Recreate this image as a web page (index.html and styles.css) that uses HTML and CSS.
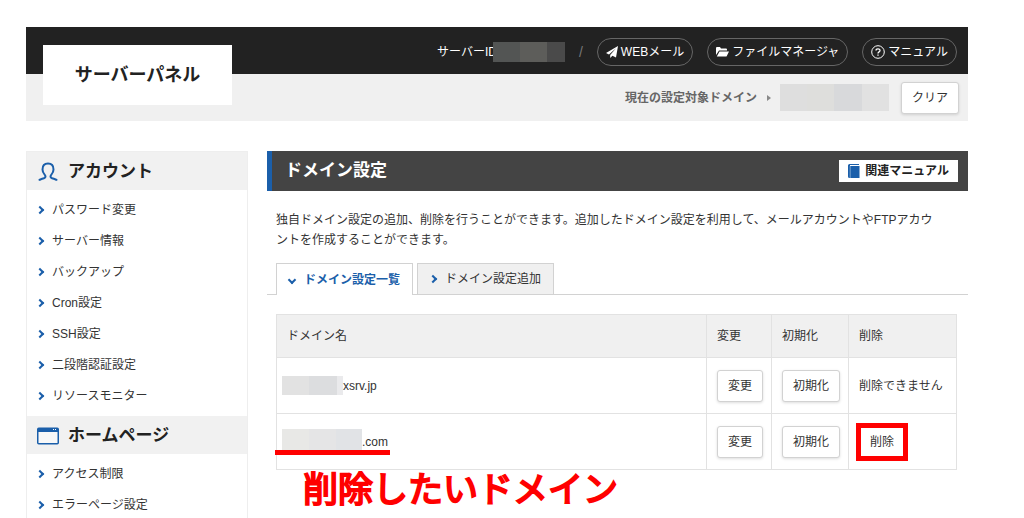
FILE: index.html
```html
<!DOCTYPE html>
<html lang="ja">
<head>
<meta charset="utf-8">
<title>サーバーパネル</title>
<link rel="stylesheet" href="styles.css">
</head>
<body>
<header class="header">
  <div class="header-top">
    <span class="server-id">サーバーID<span class="mask mask-id"></span></span>
    <span class="slash">/</span>
    <a class="pill" href="#"><svg width="12" height="12" viewBox="0 0 12 12"><path fill="#fff" d="M12 0 0 7l3 1.500L10 2.200 4.200 9V12l2.200-2.300L10 11.500z"/></svg>WEBメール</a>
    <a class="pill" href="#"><svg width="13" height="12" viewBox="0 0 13 12"><path fill="#fff" d="M0 9V2q0-1 1-1h3l1 1.500h5q1 0 1 1V4.500H3L0 9zM3.500 5.500H13L10.800 10q-.3.500-.8.500H.800z"/></svg>ファイルマネージャ</a>
    <a class="pill" href="#"><svg width="14" height="14" viewBox="0 0 14 14" fill="none" stroke="#fff"><circle cx="7" cy="7" r="6.300"/><path stroke-width="1.300" d="M5 5.600C5 3.300 9 3.300 9 5.500 9 7 7 6.800 7 8.500M7 9.500v1.300"/></svg>マニュアル</a>
  </div>
  <div class="header-sub">
    <span class="target">現在の設定対象ドメイン</span>
    <svg class="target-arrow" width="4" height="6" viewBox="0 0 4 6"><path fill="#888" d="M0 0l4 3-4 3z"/></svg>
    <span class="mask mask-domain"></span>
    <button class="btn" type="button">クリア</button>
  </div>
  <a class="logo" href="#">サーバーパネル</a>
</header>

<div class="layout">
  <nav class="side">
    <h2 class="side-title"><svg width="22" height="20" viewBox="0 0 22 20" fill="none" stroke="#1b5faa" stroke-width="2"><path d="M2 18.500C3 16.500 8.500 17 8.500 14.500 8.500 12.500 5.500 11.500 5.500 7.500 5.500 3.500 7.800 1.500 11 1.500s5.500 2 5.500 6c0 4-3 5-3 7 0 2.500 5.500 2 6.500 4"/></svg>アカウント</h2>
    <ul class="side-list">
      <li><a href="#">パスワード変更</a></li>
      <li><a href="#">サーバー情報</a></li>
      <li><a href="#">バックアップ</a></li>
      <li><a href="#">Cron設定</a></li>
      <li><a href="#">SSH設定</a></li>
      <li><a href="#">二段階認証設定</a></li>
      <li><a href="#">リソースモニター</a></li>
    </ul>
    <h2 class="side-title"><svg width="22" height="18" viewBox="0 0 22 18"><rect x=".750" y="1.250" width="20.500" height="15.500" rx="1" fill="#f8f8f8" stroke="#1b5faa" stroke-width="1.500"/><path fill="#1b5faa" d="M1 1h20v4H1z"/><path stroke="#fff" stroke-width="1" stroke-dasharray="1 1" d="M16 2.500h4"/></svg>ホームページ</h2>
    <ul class="side-list">
      <li><a href="#">アクセス制限</a></li>
      <li><a href="#">エラーページ設定</a></li>
    </ul>
  </nav>

  <main class="main">
    <div class="title-bar">
      <h1>ドメイン設定</h1>
      <a class="manual" href="#"><svg width="12" height="14" viewBox="0 0 12 14"><path fill="#1b5faa" d="M1.500 0H11v1H2v1h9.500v12H1.500Q0 14 0 12.500v-11Q0 0 1.500 0z"/><path stroke="#8fb2d8" stroke-width=".800" d="M2.200 2v12"/></svg>関連マニュアル</a>
    </div>
    <p class="lead">独自ドメイン設定の追加、削除を行うことができます。追加したドメイン設定を利用して、メールアカウントやFTPアカウントを作成することができます。</p>
    <div class="tabs">
      <a class="tab tab-active" href="#">ドメイン設定一覧</a>
      <a class="tab" href="#">ドメイン設定追加</a>
    </div>
    <div class="table-area">
      <table class="domains">
        <thead>
          <tr><th class="col-name" scope="col">ドメイン名</th><th class="col-edit" scope="col">変更</th><th class="col-init" scope="col">初期化</th><th class="col-del" scope="col">削除</th></tr>
        </thead>
        <tbody>
          <tr>
            <td><div class="domain"><span class="mask mask-a"></span>xsrv.jp</div></td>
            <td><button class="btn" type="button">変更</button></td>
            <td><button class="btn" type="button">初期化</button></td>
            <td>削除できません</td>
          </tr>
          <tr>
            <td><div class="domain domain-marked"><span class="mask mask-b"></span>.com</div></td>
            <td><button class="btn" type="button">変更</button></td>
            <td><button class="btn" type="button">初期化</button></td>
            <td><button class="btn btn-marked" type="button">削除</button></td>
          </tr>
        </tbody>
      </table>
      <p class="note">削除したいドメイン</p>
    </div>
  </main>
</div>
</body>
</html>
```
FILE: styles.css
```css
*, *::before, *::after { box-sizing: border-box; }

body {
  margin: 0;
  padding: 27px 56px 0 26px;
  height: 100vh;
  overflow: hidden;
  background: #fff;
  color: #333;
  font: 12px/20px "Liberation Sans", "Noto Sans CJK JP", sans-serif;
}

a { color: inherit; text-decoration: none; }
h1, h2, p, ul { margin: 0; padding: 0; }
svg { flex: none; }

.mask { display: inline-block; flex: none; }

/* header */
.header { position: relative; margin-bottom: 30px; }

.header-top,
.header-sub {
  display: flex;
  align-items: center;
  justify-content: flex-end;
  height: 47px;
}

.header-top {
  gap: 14px;
  padding: 2px 11px 0 0;
  background: #222;
  color: #fff;
}

.header-sub {
  padding-right: 9px;
  background: #f0f0f0;
}

.server-id { display: flex; align-items: center; }
.slash { color: #777; font-size: 14px; }

.pill {
  display: flex;
  align-items: center;
  gap: 3px;
  height: 28px;
  padding: 0 8px;
  border: 1px solid #666;
  border-radius: 14px;
}

.mask-id {
  width: 72px;
  height: 20px;
  margin-left: -4px;
  background: linear-gradient(90deg, #535554 0 27px, #5d5d5a 27px 54px, #4a4a4a 54px);
}

.target { color: #666; font-weight: bold; }
.target-arrow { margin: 0 9px 0 10px; }

.mask-domain {
  width: 109px;
  height: 27px;
  margin-right: 12px;
  background: linear-gradient(90deg, #dedede 0 27px, #dededc 27px 54px, #d8d9db 54px 82px, #e1e1e1 82px);
}

.logo {
  position: absolute;
  top: 18px;
  left: 17px;
  display: flex;
  align-items: center;
  justify-content: center;
  width: 189px;
  height: 60px;
  background: #fff;
  color: #222;
  font-size: 18px;
  font-weight: bold;
}

.btn {
  height: 32px;
  padding: 0 10px;
  border: 1px solid #d2d2d2;
  border-radius: 3px;
  background: #fff;
  box-shadow: 0 1px 3px #0002;
  color: #333;
  font: inherit;
  white-space: nowrap;
}

/* columns */
.layout {
  display: grid;
  grid-template-columns: 222px 1fr;
  gap: 19px;
  align-items: start;
}

.side { border: 1px solid #eee; }

.side-title {
  display: flex;
  align-items: center;
  gap: 9px;
  height: 38px;
  padding: 2px 0 0 10px;
  background: #f1f1f1;
  color: #222;
  font-size: 17px;
  font-weight: bold;
}

.side-list { padding: 4px 0 5px; list-style: none; }

.side-list a {
  display: flex;
  align-items: center;
  gap: 9px;
  height: 31px;
  padding-left: 10px;
}

.side-list a::before,
.tab::before {
  content: "";
  width: 6px;
  height: 6px;
  border: solid #1b5faa;
  border-width: 2px 2px 0 0;
  transform: rotate(45deg);
}

/* main column */
.title-bar {
  display: flex;
  align-items: center;
  justify-content: space-between;
  height: 40px;
  padding: 0 10px 0 13px;
  border-left: 5px solid #1b5faa;
  background: #444;
  color: #fff;
}

.title-bar h1 { font-size: 17px; font-weight: bold; }

.manual {
  display: flex;
  align-items: center;
  gap: 5px;
  height: 22px;
  padding: 0 9px;
  background: #fff;
  color: #222;
  font-weight: bold;
}

.lead { padding: 19px 30px 13px 9px; }

.tabs {
  display: flex;
  gap: 4px;
  padding-left: 9px;
  border-bottom: 1px solid #d2d2d2;
}

.tab {
  display: flex;
  align-items: center;
  gap: 9px;
  height: 31px;
  padding: 0 12px;
  border: 1px solid #d2d2d2;
  border-bottom: 0;
  background: #f0f0f0;
}

.tab-active {
  height: 32px;
  margin-bottom: -1px;
  background: #fff;
  color: #1b5faa;
  font-weight: bold;
}

.tab-active::before { transform: rotate(135deg); }

.table-area { position: relative; padding: 19px 11px 0 9px; }

.domains {
  width: 100%;
  table-layout: fixed;
  border-collapse: collapse;
}

.domains th,
.domains td {
  padding: 0 8px 0 10px;
  border: 1px solid #e2e2e2;
  text-align: left;
}

.domains th {
  height: 43px;
  background: #f0f0f0;
  font-weight: normal;
}

.domains td { height: 56px; }
.col-edit { width: 65px; }
.col-init { width: 77px; }
.col-del { width: 108px; }

.domain {
  position: relative;
  display: flex;
  align-items: center;
  margin-left: -5px;
}

.mask-a {
  width: 61px;
  height: 19px;
  background: linear-gradient(90deg, #e2e2e2 0 27px, #dcdddf 27px 55px, #eaeaec 55px);
}

.mask-b {
  width: 80px;
  height: 25px;
  background: linear-gradient(90deg, #e8e8e6 0 27px, #e5e5e6 27px 54px, #e1e3e6 54px);
}

/* red markers laid over the table */
.domain-marked::after {
  content: "";
  position: absolute;
  top: 21px;
  left: -7px;
  width: 115px;
  height: 5px;
  background: #f00;
}

.btn-marked {
  border-radius: 0;
  outline: 5px solid #f00;
  outline-offset: -2px;
}

.note {
  position: absolute;
  top: 173px;
  left: 36px;
  color: #f00;
  font-size: 35px;
  font-weight: 400;
  line-height: 44px;
  white-space: nowrap;
  -webkit-text-stroke: 2px #f00;
  stroke-linejoin: round;
}
```
